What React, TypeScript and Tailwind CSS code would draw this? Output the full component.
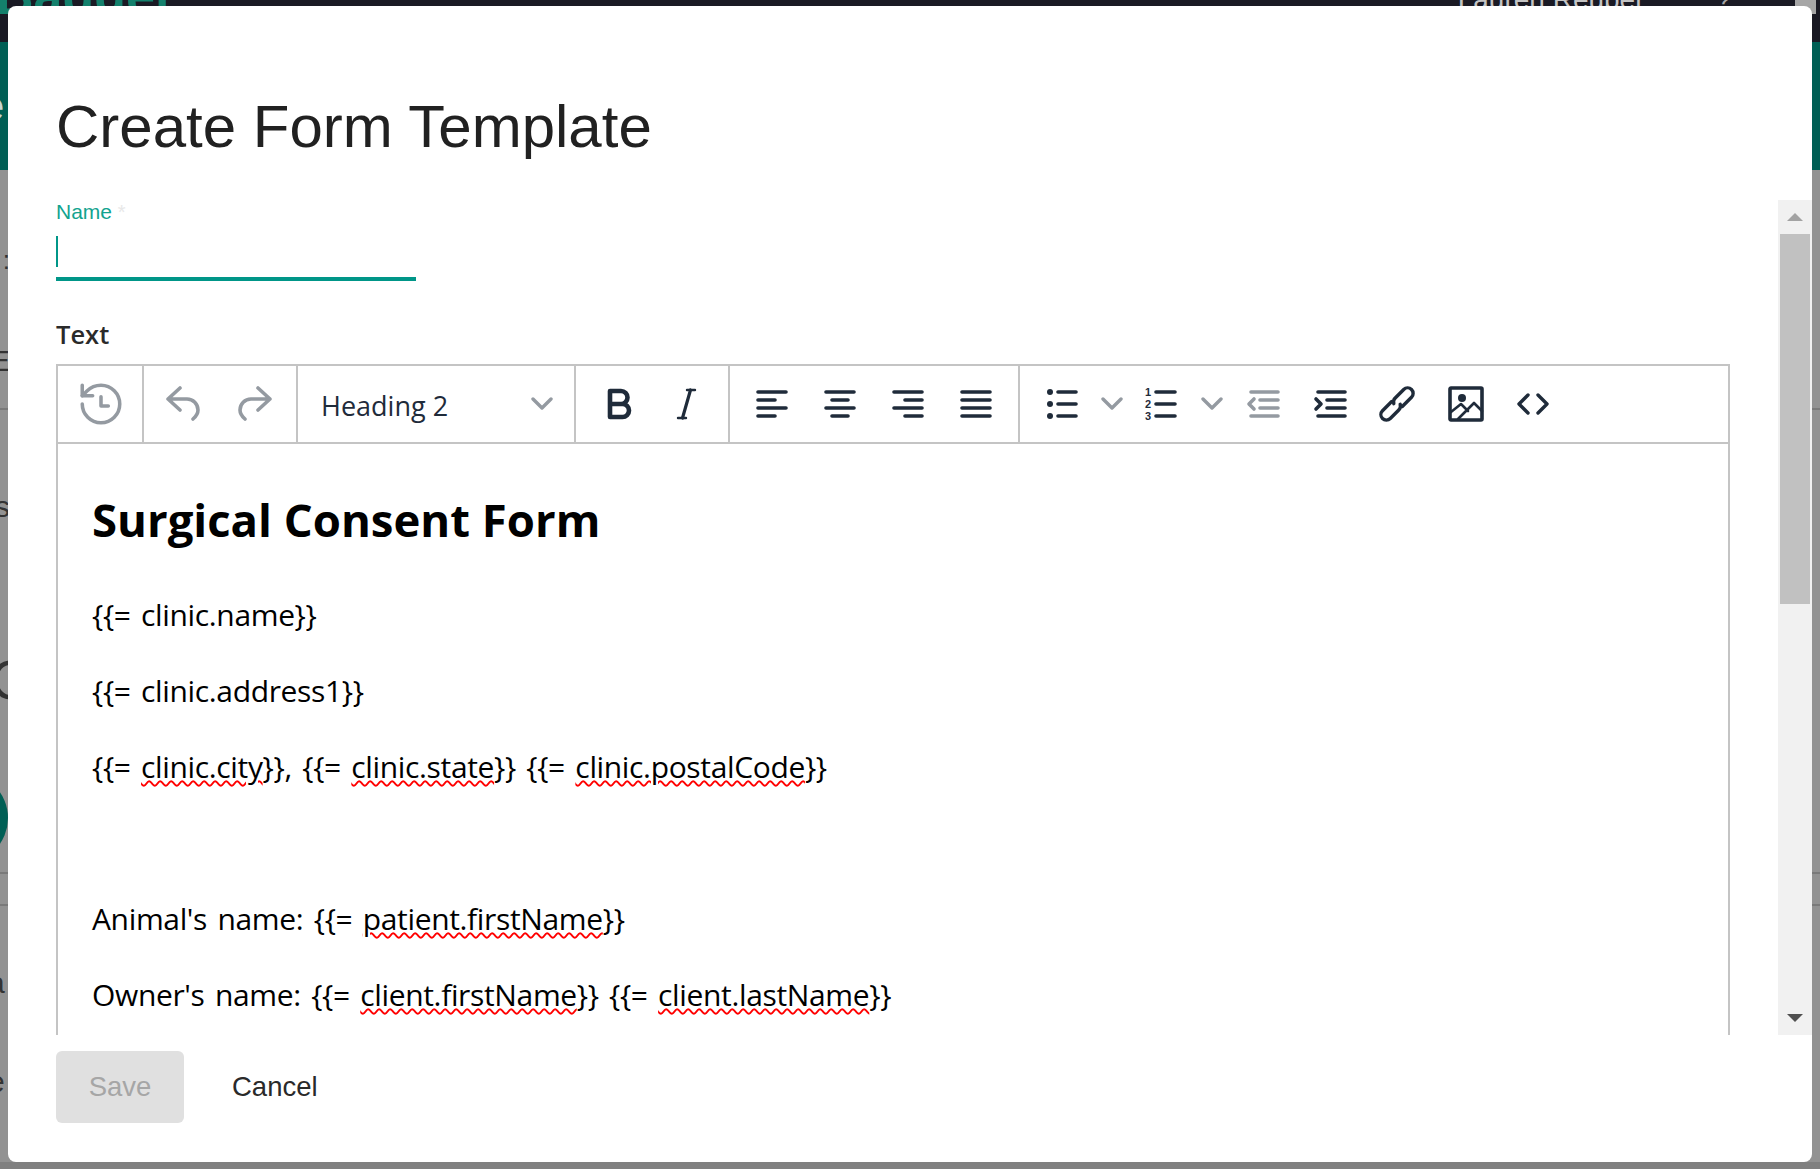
import React from 'react';

const DARK = '#1f2b3a';
const GRAY = '#949aa1';

const Svg: React.FC<{ size?: number; children: React.ReactNode }> = ({ size = 36, children }) => (
  <svg width={size} height={size} viewBox={`0 0 ${size} ${size}`} fill="none" strokeLinecap="round" strokeLinejoin="round">
    {children}
  </svg>
);

const HistoryIcon = () => (
  <svg width="50" height="50" viewBox="0 0 24 24" fill="none" stroke={GRAY} strokeWidth="1.7" strokeLinecap="round" strokeLinejoin="round">
    <path d="M3 12a9 9 0 1 0 9-9 9.75 9.75 0 0 0-6.74 2.74L3 8" />
    <path d="M3 3v5h5" />
    <path d="M12 8.5V13h3.5" />
  </svg>
);

const UndoIcon = ({ flip }: { flip?: boolean }) => (
  <span className={flip ? '-scale-x-100 flex' : 'flex'}>
    <Svg>
      <path d="M3 13H22a11 11 0 0 1 11 11c0 3-1.5 6-5 9M15 2 3 13l12 11" stroke={GRAY} strokeWidth="3.6" />
    </Svg>
  </span>
);

const Chevron = () => (
  <svg width="22" height="14" viewBox="0 0 22 14" fill="none">
    <path d="M2 2l9 9 9-9" stroke={GRAY} strokeWidth="3.4" strokeLinecap="round" strokeLinejoin="round" />
  </svg>
);

const BoldIcon = () => (
  <svg width="30" height="36" viewBox="0 0 30 36" fill="none" stroke={DARK} strokeWidth="4.6" strokeLinejoin="round">
    <path d="M6 18h11a6.5 6.5 0 0 0 0-13H6v26h12.5a6.5 6.5 0 0 0 0-13" />
  </svg>
);

const ItalicIcon = () => (
  <Svg>
    <path d="M19 4h8M10 32h8" stroke={DARK} strokeWidth="2.4" />
    <path d="M22.5 4l-8 28" stroke={DARK} strokeWidth="3.2" />
  </Svg>
);

// align: which side the short lines sit on
const AlignIcon = ({ kind }: { kind: 'left' | 'center' | 'right' | 'justify' }) => {
  const short = kind === 'left' ? 'M3 13h17M3 29h17' : kind === 'center' ? 'M9 13h16M9 29h16' : kind === 'right' ? 'M14 13h17M14 29h17' : 'M3 13h28M3 29h28';
  return (
    <svg width="34" height="34" viewBox="0 0 34 34" fill="none" stroke={DARK} strokeWidth="3.6" strokeLinecap="round">
      <path d="M3 5h28M3 21h28" />
      <path d={short} />
    </svg>
  );
};

const ListIcon = () => (
  <svg width="34" height="34" viewBox="0 0 34 34" fill="none">
    <circle cx="5" cy="5" r="3" fill={DARK} />
    <circle cx="5" cy="17" r="3" fill={DARK} />
    <circle cx="5" cy="29" r="3" fill={DARK} />
    <path d="M13 5h18M13 17h18M13 29h18" stroke={DARK} strokeWidth="3.6" strokeLinecap="round" />
  </svg>
);

const NumberedIcon = () => (
  <svg width="34" height="34" viewBox="0 0 34 34" fill="none">
    <g fill={DARK} fontFamily="'Liberation Sans', sans-serif" fontWeight="700" fontSize="11" textAnchor="middle">
      <text x="4" y="9">1</text>
      <text x="4" y="21">2</text>
      <text x="4" y="33">3</text>
    </g>
    <path d="M12 5h19M12 17h19M12 29h19" stroke={DARK} strokeWidth="3.6" strokeLinecap="round" />
  </svg>
);

const IndentIcon = ({ out }: { out?: boolean }) => {
  const c = out ? GRAY : DARK;
  return (
    <svg width="34" height="34" viewBox="0 0 34 34" fill="none" stroke={c} strokeWidth="3.6" strokeLinecap="round" strokeLinejoin="round">
      <path d="M5 5h27M14 13h18M14 21h18M5 29h27" />
      <path d={out ? 'M8 12l-5 5 5 5' : 'M3 12l5 5-5 5'} />
    </svg>
  );
};

const LinkIcon = () => (
  <svg width="40" height="40" viewBox="-2 -2 40 40" fill="none" stroke={DARK} strokeWidth="3.4" strokeLinecap="round">
    <g transform="rotate(-45 18 18)">
      <path d="M16 12.5H3a5.5 5.5 0 0 0 0 11h12a5.5 5.5 0 0 0 5-3" />
      <path d="M20 23.5h13a5.5 5.5 0 0 0 0-11H21a5.5 5.5 0 0 0-5 3" />
    </g>
  </svg>
);

const ImageIcon = () => (
  <Svg>
    <rect x="2" y="2" width="32" height="32" rx="1" stroke={DARK} strokeWidth="3.6" />
    <circle cx="14" cy="12" r="4" fill={DARK} />
    <path d="M3 26l10-8 7 7M10 33l16-16 8 8" stroke={DARK} strokeWidth="2.6" />
  </Svg>
);

const CodeIcon = () => (
  <svg width="34" height="24" viewBox="0 0 34 24" fill="none" stroke={DARK} strokeWidth="3.4" strokeLinecap="round" strokeLinejoin="round">
    <path d="M12 3l-9 9 9 9M22 3l9 9-9 9" />
  </svg>
);

const listGroup: { w: number; icon: React.ReactNode }[] = [
  { w: 68, icon: <ListIcon /> },
  { w: 32, icon: <Chevron /> },
  { w: 66, icon: <NumberedIcon /> },
  { w: 36, icon: <Chevron /> },
  { w: 66, icon: <IndentIcon out /> },
  { w: 68, icon: <IndentIcon /> },
  { w: 66, icon: <LinkIcon /> },
  { w: 72, icon: <ImageIcon /> },
  { w: 62, icon: <CodeIcon /> },
];

const Squiggle: React.FC<{ children: React.ReactNode }> = ({ children }) => (
  <span className="underline decoration-wavy decoration-[#ff0000] decoration-2 underline-offset-[2px]">{children}</span>
);

const Toolbar = () => (
  <div className="flex h-[78px] border-b-2 border-[#c4c4c4] text-[#1f2b3a]">
    <div className="flex w-[86px] items-center border-r-2 border-[#c4c4c4] pl-[9px]">
      <button className="flex w-[68px] justify-center"><HistoryIcon /></button>
    </div>
    <div className="flex w-[154px] items-center border-r-2 border-[#c4c4c4] pl-[3px]">
      <button className="flex w-[72px] justify-center"><UndoIcon /></button>
      <button className="flex w-[72px] justify-center"><UndoIcon flip /></button>
    </div>
    <div className="flex w-[278px] items-center justify-between border-r-2 border-[#c4c4c4] pl-[23px] pr-[21px]">
      <span className="pt-[5px] font-['Open_Sans',sans-serif] text-[27px]">Heading 2</span>
      <Chevron />
    </div>
    <div className="flex w-[154px] items-center border-r-2 border-[#c4c4c4] pl-[9px]">
      <button className="flex w-[67px] justify-center"><BoldIcon /></button>
      <button className="flex w-[67px] justify-center"><ItalicIcon /></button>
    </div>
    <div className="flex w-[290px] items-center border-r-2 border-[#c4c4c4] pl-[8px]">
      <button className="flex w-[68px] justify-center"><AlignIcon kind="left" /></button>
      <button className="flex w-[68px] justify-center"><AlignIcon kind="center" /></button>
      <button className="flex w-[68px] justify-center"><AlignIcon kind="right" /></button>
      <button className="flex w-[68px] justify-center"><AlignIcon kind="justify" /></button>
    </div>
    <div className="flex flex-1 items-center pl-[8px]">
      {listGroup.map((b, i) => (
        <button key={i} className="flex justify-center" style={{ width: b.w }}>{b.icon}</button>
      ))}
    </div>
  </div>
);

const Editor = () => (
  <div className="h-[800px] w-[1674px] border-x-2 border-t-2 border-[#c4c4c4]">
    <Toolbar />
    <div className="pl-[34px] pt-[42px] font-['Open_Sans',sans-serif] text-[30px] text-black">
      <h2 className="mb-[41px] text-[45.5px] font-bold leading-[66px]">Surgical Consent Form</h2>
      <div className="tracking-[-0.35px] [word-spacing:3px]">
        <p className="mb-[32px] leading-[44px]">{'{{= clinic.name}}'}</p>
        <p className="mb-[32px] leading-[44px]">{'{{= clinic.address1}}'}</p>
        <p className="mb-[32px] leading-[44px]">
          {'{{= '}<Squiggle>clinic.city</Squiggle>{'}}, {{= '}<Squiggle>clinic.state</Squiggle>{'}} {{= '}<Squiggle>clinic.postalCode</Squiggle>{'}}'}
        </p>
        <p className="mb-[32px] h-[44px]" />
        <p className="mb-[32px] leading-[44px]">
          {"Animal's name: {{= "}<Squiggle>patient.firstName</Squiggle>{'}}'}
        </p>
        <p className="mb-[32px] leading-[44px]">
          {"Owner's name: {{= "}<Squiggle>client.firstName</Squiggle>{'}} {{= '}<Squiggle>client.lastName</Squiggle>{'}}'}
        </p>
      </div>
    </div>
  </div>
);

const Scrollbar = () => (
  <div className="flex w-[34px] shrink-0 flex-col bg-[#f1f1f1]">
    <div className="flex h-[34px] items-center justify-center">
      <svg width="16" height="8" viewBox="0 0 16 8"><path d="M8 0l8 8H0z" fill="#a3a3a3" /></svg>
    </div>
    <div className="mx-[2px] h-[370px] bg-[#c1c1c1]" />
    <div className="flex-1" />
    <div className="flex h-[34px] items-center justify-center">
      <svg width="16" height="8" viewBox="0 0 16 8"><path d="M0 0h16L8 8z" fill="#505050" /></svg>
    </div>
  </div>
);

const bgRows: { h: number; text?: string; size?: number; line?: boolean }[] = [
  { h: 70 },
  { h: 40, text: ':', size: 26 },
  { h: 50 },
  { h: 62, text: 'E', size: 30 },
  { h: 18, line: true },
  { h: 76 },
  { h: 42, text: 's', size: 30 },
  { h: 122 },
  { h: 60, text: 'C', size: 56 },
  { h: 63 },
];

const Backdrop = () => (
  <div className="flex h-[1169px] flex-col overflow-hidden bg-[#929292] font-['Liberation_Sans',sans-serif]">
    <div className="flex h-[42px] shrink-0 justify-between overflow-hidden bg-[#1a1a24] pr-[2px]">
      <span className="-ml-[4px] -mt-[30px] text-[52px] font-bold leading-[52px] text-[#14806c]">Badger</span>
      <div className="flex">
        <span className="-mt-[16px] text-[28px] leading-[32px] text-[#c4c4c4]">Lauren Reuber</span>
        <span className="-mt-[14px] ml-[72px] text-[26px] leading-[28px] text-[#a6a6a6]">?</span>
        <div className="ml-[64px] mr-[2px] h-[14px] w-[21px] bg-[#a6a6a6]" />
      </div>
    </div>
    <div className="flex h-[128px] shrink-0 items-center overflow-hidden bg-[#005f55]">
      <span className="-ml-[18px] text-[40px] text-[#c9d6d3]">e</span>
    </div>
    {bgRows.map((r, i) => (
      <div key={i} className={`flex shrink-0 items-center overflow-hidden ${r.line ? 'border-b-2 border-[#7a7a7a]' : ''}`} style={{ height: r.h }}>
        {r.text && <span className="-ml-[10px] w-[20px] text-right leading-none text-[#333]" style={{ fontSize: r.size }}>{r.text}</span>}
      </div>
    ))}
    <div className="-ml-[82px] h-[90px] w-[90px] shrink-0 rounded-full bg-[#005f55]" />
    <div className="h-[11px] shrink-0 border-b-2 border-[#7a7a7a]" />
    <div className="h-[32px] shrink-0 border-b-2 border-[#7a7a7a]" />
    <div className="flex h-[199px] shrink-0 flex-col justify-between pt-[62px] pb-[8px] text-[30px] leading-none text-[#333]">
      <span className="-ml-[12px]">a</span>
      <span className="-ml-[12px]">e</span>
    </div>
    <div className="flex-1" />
    <div className="h-[7px] shrink-0 bg-[#808080]" />
  </div>
);

export default function App() {
  return (
    <div className="relative h-[1169px] w-full overflow-hidden">
      <Backdrop />
      <div className="absolute left-[8px] top-[6px] flex h-[1156px] w-[1804px] flex-col rounded-[8px] bg-white font-['Liberation_Sans',sans-serif]">
        <h1 className="h-[194px] shrink-0 pl-[48px] pt-[86px] text-[60px] leading-[70px] text-[#212121]">Create Form Template</h1>
        <div className="flex min-h-0 flex-1 overflow-hidden">
          <div className="min-w-0 flex-1 overflow-hidden pl-[48px]">
            <div className="h-[24px] text-[21px] leading-[24px] text-[#12a38f]">
              Name <span className="align-top text-[20px] text-[#e8e8e8]">*</span>
            </div>
            <div className="mt-[4px] h-[53px] w-[360px] border-b-4 border-[#009688] pt-[8px]">
              <div className="h-[31px] w-[2px] bg-[#009688]" />
            </div>
            <div className="mt-[35px] font-['Open_Sans',sans-serif] text-[25.5px] font-semibold leading-[36px] text-[#2a2a2a]">Text</div>
            <div className="mt-[12px]">
              <Editor />
            </div>
          </div>
          <Scrollbar />
        </div>
        <div className="flex h-[127px] shrink-0 items-start pl-[48px] pt-[16px] text-[27.5px]">
          <button className="h-[72px] w-[128px] rounded-[6px] bg-[#e0e0e0] text-[#a6a6a6]">Save</button>
          <button className="ml-[48px] h-[72px] text-[#2a2a2a]">Cancel</button>
        </div>
      </div>
    </div>
  );
}
